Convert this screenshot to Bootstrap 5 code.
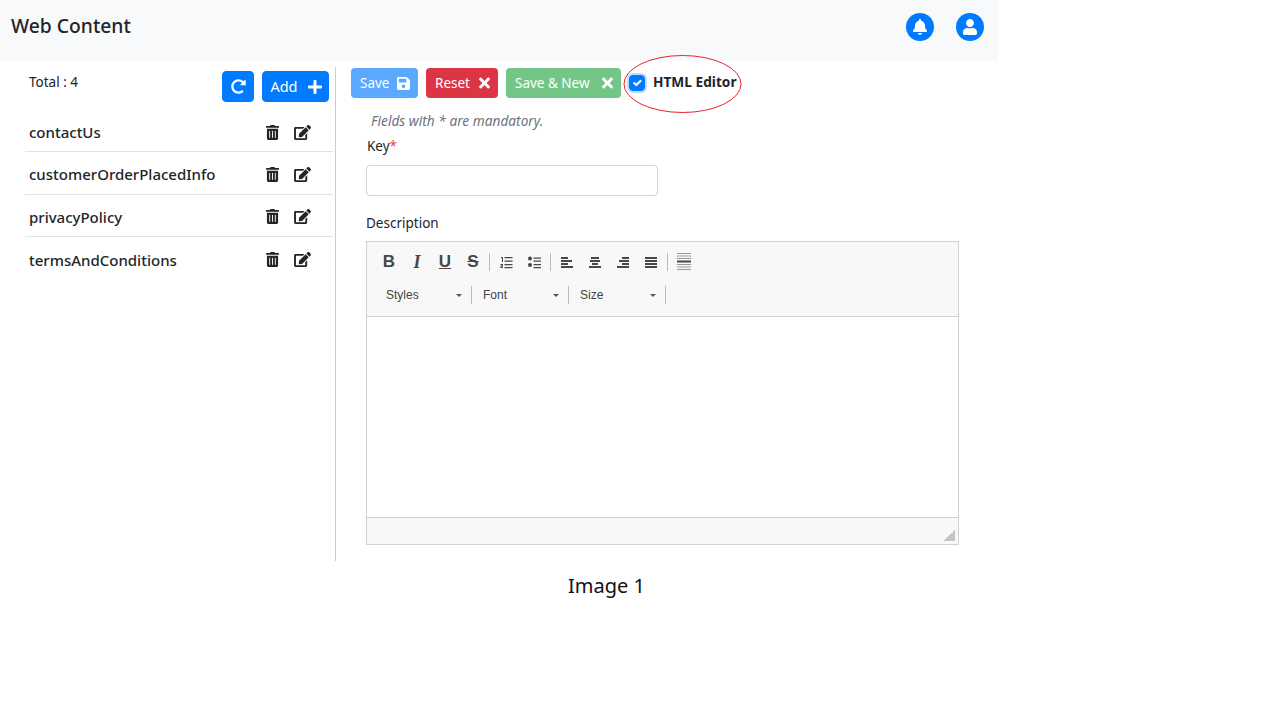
<!DOCTYPE html>
<html lang="en">
<head>
    <meta charset="UTF-8">
    <meta name="viewport" content="width=device-width, initial-scale=1.0">
    <title>Web Content</title>
    <link href="https://cdn.jsdelivr.net/npm/bootstrap@5.3.0/dist/css/bootstrap.min.css" rel="stylesheet">
    <style>
        body { font-family: "Noto Sans", "Open Sans", sans-serif; color: #212529; background: #fff; }
        .fa { fill: currentColor; display: inline-block; }
        .page-wrap { width: 998px; }
        .top-header { height: 61px; background: #f8f9fa; padding: 0 14px 8px 11px; }
        .top-title { font-size: 19.3px; font-weight: 500; color: #212529; }
        .round-icon { width: 28px; height: 28px; border-radius: 50%; background: #007bff; color: #fff; }
        .header-icons { gap: 22px; }
        .side-pane { width: 336px; height: 494px; margin-top: 6px; border-right: 1px solid #ccc; padding-left: 25px; }
        .side-head { height: 43px; padding: 4px 6px 0 4px; }
        .total-text { font-size: 13.5px; margin-top: 1px; }
        .blue-btn { background: #007bff; border-color: #007bff; color: #fff; height: 31px; padding: 0; font-size: 14.5px; border-radius: 4px; }
        .refresh-btn { width: 32px; }
        .add-btn { width: 67px; gap: 10px; padding-left: 1px; }
        .key-list { width: 308px; }
        .key-list .list-group-item { height: 42.4px; padding: 3px 22px 0 4px; font-size: 15px; font-weight: 500; color: #212529; border-color: #dee2e6; }
        .row-icons { gap: 15px; color: #212529; }
        .main-pane { margin-top: 7px; padding-left: 15px; }
        .act-btn { height: 30px; padding: 0 8px 0 9px; font-size: 13.5px; color: #fff; border: 0; border-radius: 4px; }
        .act-save { background: #5aa9ff; width: 67px; }
        .act-reset { background: #dc3545; width: 72px; }
        .act-new { background: #74c687; width: 115px; }
        .editor-toggle { position: relative; }
        .editor-toggle .form-check-input { width: 16px; height: 16px; margin: 0; background-color: #007bff; border-color: #007bff; border-radius: 4px; box-shadow: 0 0 0 2px #bfdcff; }
        .editor-toggle label { font-size: 13.7px; font-weight: 700; margin: -2px 0 0 8px; }
        .red-ring { position: absolute; left: -7px; top: -20px; pointer-events: none; }
        .form-area { padding-left: 15px; width: 608px; }
        .hint-text { font-size: 13.7px; font-style: italic; color: #6c757d; margin: 13px 0 0 5px; line-height: 20px; }
        .field-label { font-size: 13.5px; margin: 5px 0 9px 1px; line-height: 20px; }
        .description-label { margin: 17px 0 8px 0; }
        .req-star { color: #e83e5c; }
        .key-input { width: 292px; height: 31px; border-color: #ced4da; border-radius: 4px; }
        .editor-box { width: 593px; height: 304px; border: 1px solid #d1d1d1; }
        .editor-tools { height: 75px; background: #f8f8f8; border-bottom: 1px solid #d1d1d1; padding: 6px 0 0 8px; }
        .tool-row { height: 28px; color: #474747; }
        .tool-row + .tool-row { margin-top: 5px; }
        .tool-cell { width: 28px; height: 28px; font-size: 17px; font-weight: 700; font-family: "Liberation Sans", sans-serif; }
        .tool-sep { width: 1px; height: 18px; background: #bcbcbc; margin: 0 2px; }
        .serif-i { font-family: "Liberation Serif", serif; font-style: italic; font-size: 18px; }
        .combo-box { width: 92px; height: 20px; padding-left: 9px; font-family: "Liberation Sans", sans-serif; font-size: 12px; color: #444; line-height: 20px; position: relative; }
        .combo-first { margin-left: 2px; }
        .combo-box::after { content: ""; position: absolute; right: 7px; top: 9px; border: 3px solid transparent; border-top-color: #555; border-bottom-width: 0; }
        .editor-body { height: 200px; background: #fff; }
        .editor-foot { height: 27px; background: #f8f8f8; border-top: 1px solid #d1d1d1; padding: 0 3px 3px 0; }
        .grip-mark { width: 11px; height: 11px; background: linear-gradient(135deg, transparent 50%, #c4c4c4 50%); }
        .caption-text { padding-left: 568px; margin-top: 9px; font-size: 20px; color: #111; line-height: 32px; }
    </style>
</head>
<body>
<svg class="d-none">
    <symbol id="i-trash" viewBox="0 0 448 512"><path d="M32 464a48 48 0 0 0 48 48h288a48 48 0 0 0 48-48V128H32zm272-256a16 16 0 0 1 32 0v224a16 16 0 0 1-32 0zm-96 0a16 16 0 0 1 32 0v224a16 16 0 0 1-32 0zm-96 0a16 16 0 0 1 32 0v224a16 16 0 0 1-32 0zM432 32H312l-9.4-18.7A24 24 0 0 0 281.1 0H166.8a23.72 23.72 0 0 0-21.4 13.3L136 32H16A16 16 0 0 0 0 48v32a16 16 0 0 0 16 16h416a16 16 0 0 0 16-16V48a16 16 0 0 0-16-16z"/></symbol>
    <symbol id="i-edit" viewBox="0 0 576 512"><path d="M402.6 83.2l90.2 90.2c3.8 3.8 3.8 10 0 13.8L274.4 405.6l-92.8 10.3c-12.4 1.4-22.9-9.1-21.5-21.5l10.3-92.8L388.8 83.2c3.8-3.8 10-3.8 13.8 0zm162-22.9l-48.8-48.8c-15.2-15.2-39.9-15.2-55.2 0l-35.4 35.4c-3.8 3.8-3.8 10 0 13.8l90.2 90.2c3.8 3.8 10 3.8 13.8 0l35.4-35.4c15.2-15.3 15.2-40 0-55.2zM384 346.2V448H64V128h229.8c3.2 0 6.2-1.3 8.5-3.5l40-40c7.6-7.6 2.2-20.5-8.5-20.5H48C21.5 64 0 85.5 0 112v352c0 26.5 21.5 48 48 48h352c26.5 0 48-21.5 48-48V306.2c0-10.7-12.9-16-20.5-8.5l-40 40c-2.2 2.3-3.5 5.3-3.5 8.5z"/></symbol>
    <symbol id="i-times" viewBox="0 0 352 512"><path d="M242.72 256l100.07-100.07c12.28-12.28 12.28-32.19 0-44.48l-22.24-22.24c-12.28-12.28-32.19-12.28-44.48 0L176 189.28 75.93 89.21c-12.28-12.28-32.19-12.28-44.48 0L9.21 111.45c-12.28 12.28-12.28 32.19 0 44.48L109.28 256 9.21 356.07c-12.28 12.28-12.28 32.19 0 44.48l22.24 22.24c12.28 12.28 32.2 12.28 44.48 0L176 322.72l100.07 100.07c12.28 12.28 32.2 12.28 44.48 0l22.24-22.24c12.28-12.28 12.28-32.19 0-44.48L242.72 256z"/></symbol>
    <symbol id="i-plus" viewBox="0 0 448 512"><path d="M416 208H272V64c0-17.67-14.33-32-32-32h-32c-17.67 0-32 14.33-32 32v144H32c-17.67 0-32 14.33-32 32v32c0 17.67 14.33 32 32 32h144v144c0 17.67 14.33 32 32 32h32c17.67 0 32-14.33 32-32V304h144c17.67 0 32-14.33 32-32v-32c0-17.67-14.33-32-32-32z"/></symbol>
    <symbol id="i-save" viewBox="0 0 448 512"><path d="M433.941 129.941l-83.882-83.882A48 48 0 0 0 316.118 32H48C21.49 32 0 53.49 0 80v352c0 26.51 21.49 48 48 48h352c26.51 0 48-21.49 48-48V163.882a48 48 0 0 0-14.059-33.941zM224 416c-35.346 0-64-28.654-64-64 0-35.346 28.654-64 64-64s64 28.654 64 64c0 35.346-28.654 64-64 64zm96-304.52V212c0 6.627-5.373 12-12 12H76c-6.627 0-12-5.373-12-12V108c0-6.627 5.373-12 12-12h228.52c3.183 0 6.235 1.264 8.485 3.515l3.48 3.48A11.996 11.996 0 0 1 320 111.48z"/></symbol>
    <symbol id="i-redo" viewBox="0 0 512 512"><path d="M256.455 8c66.269.119 126.437 26.233 170.859 68.685l35.715-35.715C478.149 25.851 504 36.559 504 57.941V192c0 13.255-10.745 24-24 24H345.941c-21.382 0-32.09-25.851-16.971-40.971l41.75-41.75c-30.864-28.899-70.801-44.907-113.23-45.273-92.398-.798-170.283 73.977-169.484 169.442C88.764 348.009 162.828 424 256 424c40.845 0 79.448-14.599 109.9-41.34 4.743-4.164 11.898-3.889 16.388.6l39.655 39.655c4.871 4.871 4.63 12.81-.485 17.431C378.173 472.92 319.674 504 256 504 119.034 504 8.001 392.967 8 256.002 7.999 119.193 119.646 7.755 256.455 8z"/></symbol>
    <symbol id="i-bell" viewBox="0 0 448 512"><path d="M224 512c35.32 0 63.97-28.65 63.97-64H160.03c0 35.35 28.65 64 63.97 64zm215.39-149.71c-19.32-20.76-55.47-51.99-55.47-154.29 0-77.7-54.48-139.9-127.94-155.16V32c0-17.67-14.32-32-31.98-32s-31.98 14.33-31.98 32v20.84C118.56 68.1 64.08 130.3 64.08 208c0 102.3-36.15 133.53-55.47 154.29-6 6.45-8.66 14.16-8.61 21.71.11 16.4 12.98 32 32.1 32h383.8c19.12 0 32-15.6 32.1-32 .05-7.55-2.61-15.27-8.61-21.71z"/></symbol>
    <symbol id="i-user" viewBox="0 0 448 512"><path d="M224 256c70.7 0 128-57.3 128-128S294.7 0 224 0 96 57.3 96 128s57.3 128 128 128zm89.6 32h-16.7c-22.2 10.2-46.9 16-72.9 16s-50.6-5.8-72.9-16h-16.7C60.2 288 0 348.2 0 422.4V464c0 26.5 21.5 48 48 48h352c26.5 0 48-21.5 48-48v-41.6c0-74.2-60.2-134.4-134.4-134.4z"/></symbol>
    <symbol id="t-ol" viewBox="0 0 16 16"><path d="M3 3h2v5H4V4H3zM2.500 10h2.500v2.500H3.500v.6H5v.9H2.500v-2.400H4v-.6H2.500zM6.500 3h8v1.300h-8zM6.500 6.500h8v1.300h-8zM6.500 10h8v1.300h-8zM6.500 13h8v1.300h-8z"/></symbol>
    <symbol id="t-ul" viewBox="0 0 16 16"><circle cx="4" cy="4.500" r="2"/><circle cx="4" cy="11" r="2"/><path d="M7.500 3.500H15v1.300H7.500zM7.500 6.500H15v1.300H7.500zM7.500 10H15v1.300H7.500zM7.500 13H15v1.300H7.500z"/></symbol>
    <symbol id="t-left" viewBox="0 0 16 16"><path d="M2 3h7v2H2zM2 6h11v2H2zM2 9h7v2H2zM2 12h12v2H2z"/></symbol>
    <symbol id="t-center" viewBox="0 0 16 16"><path d="M4 3h8v2H4zM3 6h10v2H3zM5 9h6v2H5zM2 12h12v2H2z"/></symbol>
    <symbol id="t-right" viewBox="0 0 16 16"><path d="M7 3h7v2H7zM4 6h10v2H4zM7 9h7v2H7zM2 12h12v2H2z"/></symbol>
    <symbol id="t-just" viewBox="0 0 16 16"><path d="M2 3h12v2H2zM2 6h12v2H2zM2 9h12v2H2zM2 12h12v2H2z"/></symbol>
    <symbol id="t-line" viewBox="0 0 16 18"><path fill="#999" d="M1 0h14v1H1zM1 2.500h14v1H1zM1 5h14v1H1zM1 11h14v1H1zM1 13.500h14v1H1zM1 16h14v1H1z"/><path d="M1 7.500h14v2H1z"/></symbol>
</svg>

<div class="page-wrap">
    <!-- Header -->
    <div class="top-header d-flex align-items-center justify-content-between">
        <div class="top-title">Web Content</div>
        <div class="d-flex header-icons">
            <span class="round-icon d-flex align-items-center justify-content-center"><svg class="fa" width="14" height="16"><use href="#i-bell"/></svg></span>
            <span class="round-icon d-flex align-items-center justify-content-center"><svg class="fa" width="14" height="16"><use href="#i-user"/></svg></span>
        </div>
    </div>

    <div class="d-flex">
        <!-- Key list -->
        <div class="side-pane flex-shrink-0">
            <div class="side-head d-flex justify-content-between align-items-start">
                <div class="total-text">Total : 4</div>
                <div class="d-flex gap-2">
                    <button class="btn blue-btn refresh-btn d-flex align-items-center justify-content-center"><svg class="fa" width="15" height="15"><use href="#i-redo"/></svg></button>
                    <button class="btn blue-btn add-btn d-flex align-items-center justify-content-center">Add <svg class="fa" width="14" height="16"><use href="#i-plus"/></svg></button>
                </div>
            </div>
            <ul class="list-group list-group-flush key-list" id="key-list"></ul>
        </div>

        <!-- Form -->
        <div class="main-pane flex-grow-1">
            <div class="d-flex align-items-center gap-2">
                <button class="btn act-btn act-save d-flex align-items-center justify-content-between">Save <svg class="fa" width="13" height="15"><use href="#i-save"/></svg></button>
                <button class="btn act-btn act-reset d-flex align-items-center justify-content-between">Reset <svg class="fa" width="11" height="16"><use href="#i-times"/></svg></button>
                <button class="btn act-btn act-new d-flex align-items-center justify-content-between">Save &amp; New <svg class="fa" width="11" height="16"><use href="#i-times"/></svg></button>
                <div class="editor-toggle d-flex align-items-center">
                    <input class="form-check-input" type="checkbox" id="html-editor" checked>
                    <label for="html-editor">HTML Editor</label>
                    <svg class="red-ring" width="120" height="60"><ellipse cx="60.500" cy="30" rx="58.500" ry="28.500" fill="none" stroke="#e8232f" stroke-width="1"/></svg>
                </div>
            </div>
            <div class="form-area">
                <div class="hint-text">Fields with * are mandatory.</div>
                <div class="field-label">Key<span class="req-star">*</span></div>
                <input type="text" class="form-control key-input">
                <div class="field-label description-label">Description</div>
                <div class="editor-box">
                    <div class="editor-tools">
                        <div class="tool-row d-flex align-items-center">
                            <span class="tool-cell d-flex align-items-center justify-content-center">B</span>
                            <span class="tool-cell serif-i d-flex align-items-center justify-content-center">I</span>
                            <span class="tool-cell d-flex align-items-center justify-content-center text-decoration-underline">U</span>
                            <span class="tool-cell d-flex align-items-center justify-content-center text-decoration-line-through">S</span>
                            <span class="tool-sep"></span>
                            <span class="tool-cell d-flex align-items-center justify-content-center"><svg class="fa" width="16" height="16"><use href="#t-ol"/></svg></span>
                            <span class="tool-cell d-flex align-items-center justify-content-center"><svg class="fa" width="16" height="16"><use href="#t-ul"/></svg></span>
                            <span class="tool-sep"></span>
                            <span class="tool-cell d-flex align-items-center justify-content-center"><svg class="fa" width="16" height="16"><use href="#t-left"/></svg></span>
                            <span class="tool-cell d-flex align-items-center justify-content-center"><svg class="fa" width="16" height="16"><use href="#t-center"/></svg></span>
                            <span class="tool-cell d-flex align-items-center justify-content-center"><svg class="fa" width="16" height="16"><use href="#t-right"/></svg></span>
                            <span class="tool-cell d-flex align-items-center justify-content-center"><svg class="fa" width="16" height="16"><use href="#t-just"/></svg></span>
                            <span class="tool-sep"></span>
                            <span class="tool-cell d-flex align-items-center justify-content-center"><svg class="fa" width="16" height="18"><use href="#t-line"/></svg></span>
                        </div>
                        <div class="tool-row d-flex align-items-center">
                            <span class="combo-box combo-first">Styles</span>
                            <span class="tool-sep"></span>
                            <span class="combo-box">Font</span>
                            <span class="tool-sep"></span>
                            <span class="combo-box">Size</span>
                            <span class="tool-sep"></span>
                        </div>
                    </div>
                    <div class="editor-body"></div>
                    <div class="editor-foot d-flex justify-content-end align-items-end"><span class="grip-mark"></span></div>
                </div>
            </div>
        </div>
    </div>
    <div class="caption-text">Image 1</div>
</div>

<script src="https://cdn.jsdelivr.net/npm/bootstrap@5.3.0/dist/js/bootstrap.bundle.min.js"></script>
<script>
    const keys = ["contactUs", "customerOrderPlacedInfo", "privacyPolicy", "termsAndConditions"];
    document.getElementById("key-list").innerHTML = keys.map(key => `
        <li class="list-group-item d-flex align-items-center justify-content-between">
            <span>${key}</span>
            <span class="row-icons d-flex align-items-center">
                <svg class="fa" width="13" height="15"><use href="#i-trash"/></svg>
                <svg class="fa" width="17" height="15"><use href="#i-edit"/></svg>
            </span>
        </li>`).join("");
</script>
</body>
</html>
